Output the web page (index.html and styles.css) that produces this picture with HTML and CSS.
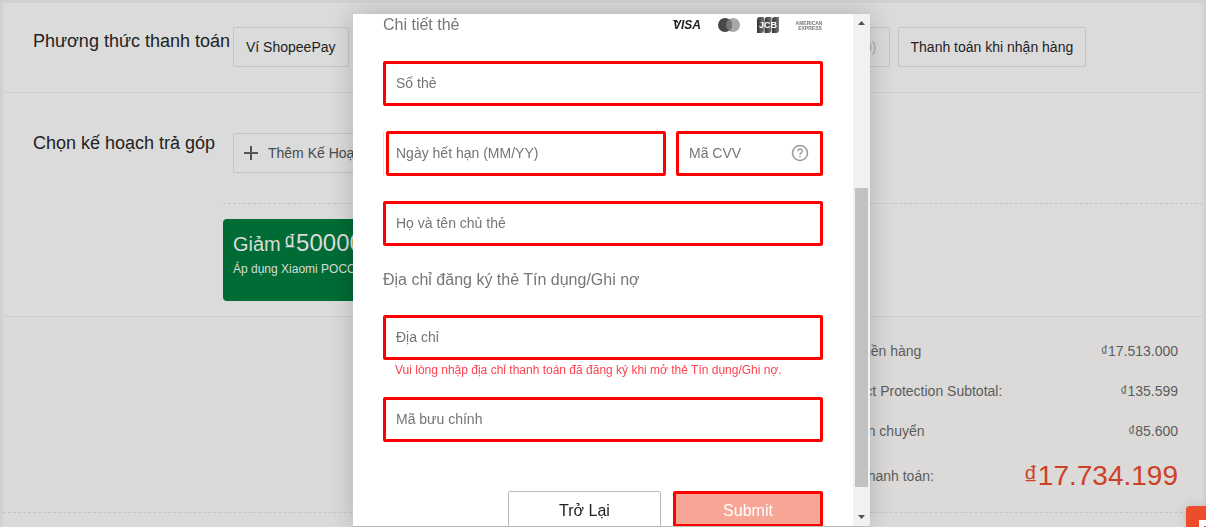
FILE: index.html
```html
<!DOCTYPE html>
<html lang="vi">
<head>
<meta charset="utf-8">
<meta name="viewport" content="width=device-width, initial-scale=1">
<title>Thanh toán</title>
<link rel="stylesheet" href="styles.css">
</head>
<body>
<main class="checkout">
  <section class="methods">
    <h2 class="row-title">Phương thức thanh toán</h2>
    <div class="options">
      <button class="option" type="button">Ví ShopeePay</button>
      <button class="option option-wide" type="button" disabled>(₫0)</button>
      <button class="option" type="button">Thanh toán khi nhận hàng</button>
    </div>
  </section>
  <section class="plans">
    <div class="plan-row">
      <h2 class="row-title row-title-tight">Chọn kế hoạch trả góp</h2>
      <button class="option option-plan" type="button">
        <svg class="plus" viewBox="0 0 14 14" aria-hidden="true"><path d="M7 0v14M0 7h14"/></svg>
        Thêm Kế Hoạch
      </button>
    </div>
    <div class="voucher-area">
      <div class="voucher">
        <p class="voucher-title">Giảm <span class="voucher-amount">₫50000</span></p>
        <p class="voucher-note">Áp dụng Xiaomi POCO</p>
      </div>
    </div>
  </section>
  <section class="summary">
    <dl class="totals">
      <div class="total-line"><dt>Tổng tiền hàng</dt><dd>₫17.513.000</dd></div>
      <div class="total-line"><dt>Product Protection Subtotal:</dt><dd>₫135.599</dd></div>
      <div class="total-line"><dt>Phí vận chuyển</dt><dd>₫85.600</dd></div>
      <div class="total-line total-final"><dt>Tổng thanh toán:</dt><dd>₫17.734.199</dd></div>
    </dl>
  </section>
</main>

<div class="overlay">
  <div class="modal" role="dialog" aria-label="Chi tiết thẻ">
    <form class="card-form">
      <div class="form-head">
        <h3 class="form-title">Chi tiết thẻ</h3>
        <div class="brands">
          <svg class="brand" width="29" height="16" viewBox="0 0 29 16" role="img" aria-label="Visa">
            <path d="M0 3h5l2 4q-3-3-7-4z" fill="#222"/>
            <text class="visa" x="1" y="12">VISA</text>
          </svg>
          <svg class="brand" width="24" height="16" viewBox="0 0 24 16" role="img" aria-label="Mastercard">
            <circle cx="16" cy="8" r="7" fill="#a8a8a8"/>
            <circle cx="8" cy="8" r="7" fill="#484848"/>
            <path d="M12 2.300a7 7 0 0 1 0 11.400a7 7 0 0 1 0-11.400" fill="#777"/>
          </svg>
          <svg class="brand" width="22" height="16" viewBox="0 0 22 16" role="img" aria-label="JCB">
            <defs><linearGradient id="stripe"><stop stop-color="#333"/><stop offset="1" stop-color="#777"/></linearGradient></defs>
            <path d="M3 0h4v13q0 3-3 3H0V3q0-3 3-3z" fill="url(#stripe)"/>
            <path d="M10.500 0h4v13q0 3-3 3h-4V3q0-3 3-3z" fill="url(#stripe)"/>
            <path d="M18 0h4v13q0 3-3 3h-4V3q0-3 3-3z" fill="url(#stripe)"/>
            <text class="jcb" x="11" y="11">JCB</text>
          </svg>
          <svg class="brand" width="28" height="16" viewBox="0 0 28 16" role="img" aria-label="American Express">
            <text class="amex" x="14" y="8">AMERICAN</text>
            <text class="amex" x="15" y="13">EXPRESS</text>
          </svg>
        </div>
      </div>
      <div class="fields">
        <input class="field" type="text" placeholder="Số thẻ" aria-label="Số thẻ">
        <div class="field-row">
          <div class="expiry"><input class="field" type="text" placeholder="Ngày hết hạn (MM/YY)" aria-label="Ngày hết hạn (MM/YY)"></div>
          <div class="cvv">
            <input class="field" type="text" placeholder="Mã CVV" aria-label="Mã CVV">
            <button class="help" type="button" aria-label="Mã CVV">
              <svg viewBox="0 0 18 18" aria-hidden="true"><circle cx="9" cy="9" r="7.500"/><path d="M6.800 7.200a2.200 2.200 0 1 1 3.200 2q-1 .5-1 1.500M9 12v1.300"/></svg>
            </button>
          </div>
        </div>
        <input class="field" type="text" placeholder="Họ và tên chủ thẻ" aria-label="Họ và tên chủ thẻ">
      </div>
      <h3 class="form-title address-title">Địa chỉ đăng ký thẻ Tín dụng/Ghi nợ</h3>
      <input class="field" type="text" placeholder="Địa chỉ" aria-label="Địa chỉ" aria-describedby="address-error">
      <p class="error" id="address-error">Vui lòng nhập địa chỉ thanh toán đã đăng ký khi mở thẻ Tín dụng/Ghi nợ.</p>
      <input class="field" type="text" placeholder="Mã bưu chính" aria-label="Mã bưu chính">
      <div class="actions">
        <button class="back" type="button">Trở Lại</button>
        <button class="submit" type="submit">Submit</button>
      </div>
    </form>
    <div class="scrollbar" aria-hidden="true">
      <svg class="arrow" viewBox="0 0 17 17"><path d="M5 11h7L8.500 7z"/></svg>
      <div class="track"><div class="thumb"></div></div>
      <svg class="arrow" viewBox="0 0 17 17"><path d="M5 6h7L8.500 10z"/></svg>
    </div>
  </div>
</div>
<button class="chat" type="button" aria-label="Chat"><span class="chat-mark"></span></button>
</body>
</html>
```

FILE: styles.css
```css
* {
  box-sizing: border-box;
}

body {
  margin: 0;
  height: 100vh;
  overflow: hidden;
  background: #d1d1d1;
  color: #222;
  font-family: "Liberation Sans", Arial, sans-serif;
  font-size: 14px;
}

h2, h3, p, dl, dd {
  margin: 0;
  font-weight: 400;
}

button, input {
  font: inherit;
}

.checkout {
  display: flex;
  flex-direction: column;
  min-height: 100vh;
  padding: 3px 3px 0;
}

.methods,
.plans {
  background: #dbdbdb;
  border-bottom: 1px solid #cecece;
}

.methods {
  display: flex;
  padding: 24px 30px 25px;
}

.row-title {
  flex: 0 0 200px;
  font-size: 18px;
  line-height: 28px;
  white-space: nowrap;
}

.row-title-tight {
  line-height: 20px;
}

.options {
  display: flex;
  gap: 8px;
}

.option {
  height: 40px;
  padding: 0 12px;
  border: 1px solid #c4c4c4;
  border-radius: 2px;
  background: transparent;
  color: #222;
  white-space: nowrap;
}

.option-wide {
  width: 533px;
  color: #aaa;
  text-align: right;
}

.option-plan {
  display: flex;
  align-items: center;
  gap: 10px;
  padding: 0 10px;
  color: #4a4a4a;
}

.plus {
  width: 14px;
  height: 14px;
  stroke: #555;
  stroke-width: 2;
}

.plan-row {
  display: flex;
  padding: 40px 30px 30px;
}

.voucher-area {
  margin-left: 220px;
  padding: 15px 0;
  border-top: 1px dashed #c4c4c4;
}

.voucher {
  width: 320px;
  height: 82px;
  padding: 9px 10px;
  border-radius: 4px;
  background: #006c35;
  color: #dbdbdb;
}

.voucher-title {
  display: flex;
  align-items: baseline;
  gap: 3px;
  font-size: 20px;
  line-height: 30px;
}

.voucher-amount {
  font-size: 24px;
}

.voucher-note {
  font-size: 12px;
  line-height: 20px;
}

.summary {
  flex: 1;
  background: #dbdad8;
}

.totals {
  display: flex;
  flex-direction: column;
  align-items: flex-end;
  padding: 14px 25px 11px 0;
  border-bottom: 1px dashed #c4c4c4;
  color: #5c5c5c;
}

.total-line {
  display: flex;
  justify-content: space-between;
  align-items: center;
  width: 350px;
  height: 40px;
}

.total-final {
  height: 50px;
}

.total-final dd {
  color: #cd4227;
  font-size: 28px;
}

.overlay {
  position: fixed;
  inset: 0;
  display: flex;
  justify-content: center;
  padding: 14px 0 0 17px;
}

.modal {
  display: flex;
  width: 517px;
  overflow: hidden;
  border-bottom: 1px solid #bbb;
  background: #fff;
  box-shadow: 0 0 24px rgba(0, 0, 0, 0.2);
}

.card-form {
  flex: 1;
  padding: 0 30px;
}

.form-head {
  display: flex;
  justify-content: space-between;
  align-items: center;
  height: 22px;
}

.form-title {
  color: #777;
  font-size: 16px;
  line-height: 20px;
}

.brands {
  display: flex;
  gap: 16px;
}

.visa {
  fill: #222;
  font-size: 12px;
  font-style: italic;
  font-weight: 700;
}

.jcb {
  fill: #fff;
  font-size: 9px;
  font-weight: 700;
  text-anchor: middle;
}

.amex {
  fill: #777;
  font-size: 5px;
  font-weight: 700;
  text-anchor: middle;
}

.fields {
  display: flex;
  flex-direction: column;
  gap: 25px;
  margin-top: 25px;
}

.field {
  display: block;
  width: 100%;
  height: 45px;
  padding: 0 10px 2px;
  border: 3px solid #f00;
  border-radius: 2px;
  outline: 0;
  background: #fff;
  color: #222;
}

.field::placeholder {
  color: #757575;
  opacity: 1;
}

.field-row {
  display: grid;
  grid-template-columns: 1fr 147px;
  gap: 10px;
}

.expiry {
  padding-left: 2px;
  border-left: 1px solid #e0e0e0;
  border-radius: 2px;
}

.expiry .field {
  padding-left: 7px;
}

.cvv {
  position: relative;
}

.help {
  position: absolute;
  top: 13px;
  right: 14px;
  width: 18px;
  height: 18px;
  padding: 0;
  border: 0;
  background: none;
}

.help svg {
  display: block;
  fill: none;
  stroke: #999;
  stroke-width: 1.5;
}

.address-title {
  margin: 24px 0 25px;
}

.error {
  padding: 0 12px;
  color: #ff424f;
  font-size: 12px;
  line-height: 20px;
  margin-bottom: 17px;
}

.actions {
  display: flex;
  justify-content: flex-end;
  align-items: flex-start;
  gap: 12px;
  margin-top: 49px;
}

.back,
.submit {
  border-radius: 2px;
  font-size: 16px;
}

.back {
  width: 153px;
  height: 40px;
  border: 1px solid #bbb;
  background: #fff;
  color: #222;
}

.submit {
  width: 150px;
  height: 36px;
  padding: 3px 0 0;
  border: 3px solid #f00;
  background: #f7a696;
  color: #fff;
}

.scrollbar {
  display: flex;
  flex: 0 0 17px;
  flex-direction: column;
  background: #f1f1f1;
}

.arrow {
  width: 17px;
  height: 17px;
  fill: #505050;
}

.track {
  display: flex;
  flex: 1;
  flex-direction: column;
  justify-content: flex-end;
  padding: 0 2px 22px;
}

.thumb {
  height: 299px;
  background: #c1c1c1;
}

.chat {
  position: fixed;
  right: 0;
  bottom: 0;
  width: 20px;
  height: 21px;
  padding: 14px 0 0 13px;
  border: 0;
  border-radius: 4px 0 0;
  background: #ee4d2d;
  box-shadow: 0 0 12px rgba(0, 0, 0, 0.15);
}

.chat-mark {
  display: block;
  height: 7px;
  border-left: 5px solid #fff;
  border-top: 6px solid #fff;
}
```
